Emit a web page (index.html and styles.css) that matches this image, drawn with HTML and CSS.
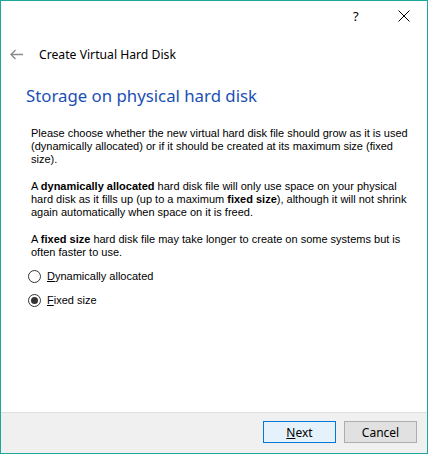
FILE: index.html
```html
<!DOCTYPE html>
<html>
<head>
<meta charset="utf-8">
<link rel="stylesheet" href="styles.css">
</head>
<body>
<div class="window">
  <div class="titlebar">
    <span class="help">?</span>
    <span class="close">
      <svg width="12" height="12" viewBox="0 0 12 12"><path d="M0.5 0.5 L11.5 11.5 M11.5 0.5 L0.5 11.5" stroke="#000" stroke-width="1" fill="none"/></svg>
    </span>
  </div>
  <div class="header">
    <svg class="back" width="13" height="11" viewBox="0 0 13 11"><path d="M1 5.5 H13 M5.5 1 L1 5.5 L5.5 10" stroke="#8c8c8c" stroke-width="1.4" fill="none"/></svg>
    <span class="title">Create Virtual Hard Disk</span>
  </div>
  <div class="main">
    <h1 class="heading">Storage on physical hard disk</h1>
    <div class="text">
      <p>Please choose whether the new virtual hard disk file should grow as it is used<br>(dynamically allocated) or if it should be created at its maximum size (fixed<br>size).</p>
      <p>A <b>dynamically allocated</b> hard disk file will only use space on your physical<br>hard disk as it fills up (up to a maximum <b>fixed size</b>), although it will not shrink<br>again automatically when space on it is freed.</p>
      <p>A <b>fixed size</b> hard disk file may take longer to create on some systems but is<br>often faster to use.</p>
    </div>
    <div class="options">
      <label class="radio"><span class="dot"></span><span><u>D</u>ynamically allocated</span></label>
      <label class="radio checked"><span class="dot"></span><span><u>F</u>ixed size</span></label>
    </div>
  </div>
  <div class="footer">
    <button class="btn primary"><u>N</u>ext</button>
    <button class="btn">Cancel</button>
  </div>
</div>
</body>
</html>
```
FILE: styles.css
```css
html, body { margin: 0; padding: 0; background: #fff; }
.window {
  width: 428px; height: 454px; box-sizing: border-box;
  border: 1px solid #1ba89a;
  display: flex; flex-direction: column;
  background: #fff;
  font-family: "Noto Sans", "Open Sans", sans-serif;
  color: #000;
}
.titlebar {
  height: 30px; display: flex; justify-content: flex-end; align-items: center;
}
.help { font-family: "Noto Sans", sans-serif; font-size: 13px; width: 12px; margin-right: 33px; }
.close { width: 12px; height: 12px; margin-right: 17px; display: flex; }
.header {
  height: 46px; display: flex; align-items: center;
}
.back { margin-left: 9px; margin-right: 16px; }
.title { font-size: 12.2px; }
.main { flex: 1; padding-left: 25px; padding-top: 7px; }
.heading {
  margin: 0; font-weight: normal; font-size: 16.8px; color: #1c4fb5; line-height: 24px;
}
.text {
  margin-top: 19px; padding-left: 5px;
  font-family: "Liberation Sans", Arial, sans-serif; font-size: 11px; line-height: 13px;
  white-space: nowrap;
}
.text p { margin: 0 0 14px 0; }
.text p:last-child { margin-bottom: 0; }
.options { margin-top: 5px; padding-left: 2px; }
.radio {
  display: flex; align-items: center; height: 24px;
  font-family: "Liberation Sans", Arial, sans-serif; font-size: 11px;
}
.dot {
  width: 11px; height: 11px; border: 1px solid #333; border-radius: 50%;
  margin-right: 6px; box-sizing: content-box; display: flex; align-items: center; justify-content: center;
}
.checked .dot::after {
  content: ""; width: 7px; height: 7px; border-radius: 50%; background: #333;
}
.footer {
  height: 41px; box-sizing: border-box; border-top: 1px solid #dfdfdf; background: #f0f0f0;
  display: flex; justify-content: flex-end; align-items: flex-start; padding-top: 8px; padding-right: 10px; gap: 8px;
  flex-shrink: 0;
}
.btn {
  width: 73px; height: 22px; border: 1px solid #adadad; background: #e1e1e1;
  font-family: "Noto Sans", sans-serif; font-size: 12px; padding: 0; color: #000;
}
.btn.primary { border-color: #0078d7; background: #e5f1fb; }
```
